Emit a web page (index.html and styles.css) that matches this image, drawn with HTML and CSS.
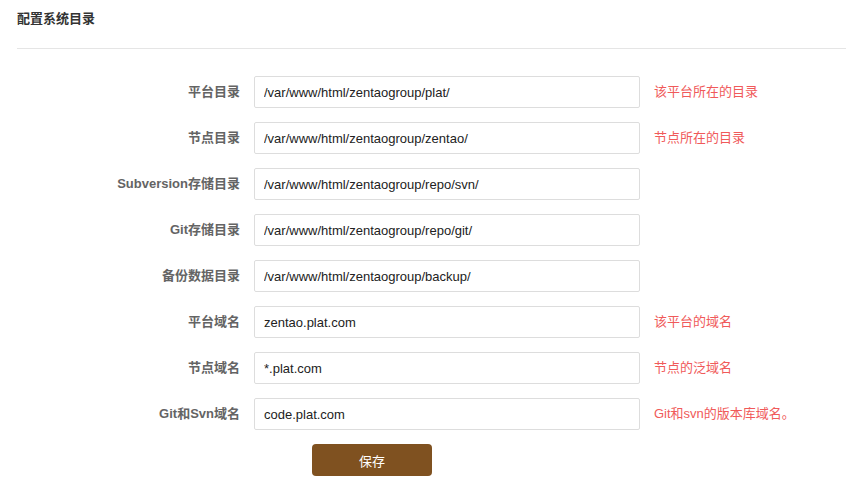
FILE: index.html
```html
<!DOCTYPE html>
<html lang="zh">
<head>
<meta charset="utf-8">
<link rel="stylesheet" href="styles.css">
</head>
<body>
<div class="page">
  <div class="header"><strong class="title">配置系统目录</strong></div>
  <form class="form">
    <label class="label">平台目录</label>
    <input class="input" type="text" value="/var/www/html/zentaogroup/plat/">
    <span class="help">该平台所在的目录</span>

    <label class="label">节点目录</label>
    <input class="input" type="text" value="/var/www/html/zentaogroup/zentao/">
    <span class="help">节点所在的目录</span>

    <label class="label">Subversion存储目录</label>
    <input class="input" type="text" value="/var/www/html/zentaogroup/repo/svn/">
    <span class="help"></span>

    <label class="label">Git存储目录</label>
    <input class="input" type="text" value="/var/www/html/zentaogroup/repo/git/">
    <span class="help"></span>

    <label class="label">备份数据目录</label>
    <input class="input" type="text" value="/var/www/html/zentaogroup/backup/">
    <span class="help"></span>

    <label class="label">平台域名</label>
    <input class="input" type="text" value="zentao.plat.com">
    <span class="help">该平台的域名</span>

    <label class="label">节点域名</label>
    <input class="input" type="text" value="*.plat.com">
    <span class="help">节点的泛域名</span>

    <label class="label">Git和Svn域名</label>
    <input class="input" type="text" value="code.plat.com">
    <span class="help">Git和svn的版本库域名。</span>

    <span></span>
    <div class="actions"><button type="button" class="btn">保存</button></div>
    <span></span>
  </form>
</div>
</body>
</html>
```

FILE: styles.css
```css
* { box-sizing: border-box; }
html, body {
  margin: 0;
  padding: 0;
  background: #fff;
}
body {
  font-family: "Liberation Sans", Arial, "Noto Sans CJK SC", sans-serif;
  font-size: 13px;
  color: #333;
}
.page {
  padding-left: 17px;
}
.header {
  height: 49px;
  border-bottom: 1px solid #e5e5e5;
  padding-top: 10px;
}
.title {
  font-size: 13px;
  font-weight: bold;
  color: #333;
  line-height: 18px;
}
.form {
  display: grid;
  grid-template-columns: 223px 386px 1fr;
  column-gap: 14px;
  row-gap: 14px;
  margin-top: 27px;
  align-items: center;
}
.label {
  text-align: right;
  font-weight: bold;
  color: #646464;
  line-height: 32px;
}
.input {
  height: 32px;
  width: 386px;
  border: 1px solid #ddd;
  border-radius: 2px;
  padding: 0 9px;
  font-family: "Liberation Sans", Arial, "Noto Sans CJK SC", sans-serif;
  font-size: 13px;
  color: #222;
  outline: none;
}
.help {
  color: #f05a5a;
  line-height: 32px;
}
.actions {
  padding-left: 58px;
}
.btn {
  width: 120px;
  height: 32px;
  border: none;
  border-radius: 4px;
  background: #7f5120;
  color: #fff;
  font-family: "Liberation Sans", Arial, "Noto Sans CJK SC", sans-serif;
  font-size: 13px;
}
```
